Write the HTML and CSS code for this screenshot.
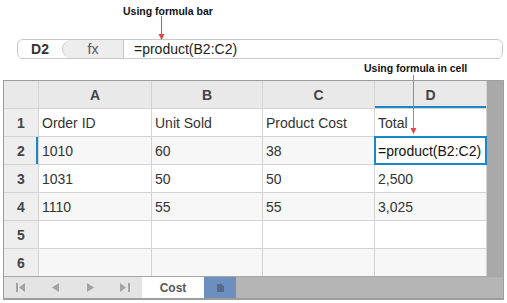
FILE: index.html
```html
<!DOCTYPE html>
<html>
<head>
    <meta charset="UTF-8">
    <title>Formula - product</title>
    <link rel="stylesheet" href="styles.css">
</head>
<body>

    <div class="note note-top">Using formula bar</div>

    <div class="formula-bar">
        <div class="cell-name">D2</div>
        <div class="fx">fx</div>
        <div class="formula">=product(B2:C2)</div>
    </div>

    <div class="note note-cell">Using formula in cell</div>

    <div class="sheet">
        <div class="sheet-body">
            <div class="grid">
                <div class="hd corner"></div>
                <div class="hd">A</div>
                <div class="hd">B</div>
                <div class="hd">C</div>
                <div class="hd active-col">D</div>

                <div class="rh">1</div>
                <div class="cell">Order ID</div>
                <div class="cell">Unit Sold</div>
                <div class="cell">Product Cost</div>
                <div class="cell">Total</div>

                <div class="rh active-row">2</div>
                <div class="cell alt">1010</div>
                <div class="cell alt">60</div>
                <div class="cell alt">38</div>
                <div class="cell alt selected">=product(B2:C2)</div>

                <div class="rh">3</div>
                <div class="cell">1031</div>
                <div class="cell">50</div>
                <div class="cell">50</div>
                <div class="cell">2,500</div>

                <div class="rh">4</div>
                <div class="cell alt">1110</div>
                <div class="cell alt">55</div>
                <div class="cell alt">55</div>
                <div class="cell alt">3,025</div>

                <div class="rh">5</div>
                <div class="cell"></div>
                <div class="cell"></div>
                <div class="cell"></div>
                <div class="cell"></div>

                <div class="rh">6</div>
                <div class="cell alt"></div>
                <div class="cell alt"></div>
                <div class="cell alt"></div>
                <div class="cell alt"></div>
            </div>
            <div class="gutter"></div>
        </div>

        <div class="tabs">
            <div class="nav">
                <div class="nav-btn">
                    <svg width="10" height="9" viewBox="0 0 10 9"><rect x="0" y="0" width="2" height="9" fill="#a3a3a3"/><polygon points="9,0 9,9 3,4.5" fill="#a3a3a3"/></svg>
                </div>
                <div class="nav-btn">
                    <svg width="7" height="9" viewBox="0 0 7 9"><polygon points="7,0 7,9 0,4.5" fill="#a3a3a3"/></svg>
                </div>
                <div class="nav-btn">
                    <svg width="7" height="9" viewBox="0 0 7 9"><polygon points="0,0 0,9 7,4.5" fill="#a3a3a3"/></svg>
                </div>
                <div class="nav-btn">
                    <svg width="10" height="9" viewBox="0 0 10 9"><polygon points="0,0 0,9 6,4.5" fill="#a3a3a3"/><rect x="8" y="0" width="2" height="9" fill="#a3a3a3"/></svg>
                </div>
            </div>
            <div class="tab">Cost</div>
            <div class="add-tab">
                <svg width="7" height="8" viewBox="0 0 7 8"><polygon points="0,0 4.5,0 7,2.5 7,8 0,8" fill="#55698a"/></svg>
            </div>
            <div class="tab-fill"></div>
        </div>
    </div>

    <!-- callout arrows drawn over the page -->
    <svg class="arrows" width="507" height="303" viewBox="0 0 507 303">
        <line x1="161.5" y1="16" x2="161.5" y2="35" stroke="#e04848" stroke-width="1"/>
        <polygon points="158.5,34 164.5,34 161.5,40" fill="#e04848"/>
        <line x1="413.5" y1="75" x2="413.5" y2="129" stroke="#e36a6a" stroke-width="1"/>
        <polygon points="410.5,128 416.5,128 413.5,134" fill="#e04848"/>
    </svg>

</body>
</html>
```

FILE: styles.css
```css
body {
    margin: 0;
    width: 507px;
    height: 303px;
    background: #fff;
    font-family: "Liberation Sans", Arial, sans-serif;
    color: #333;
    position: relative;
    overflow: hidden;
}

.note {
    font-size: 10.5px;
    font-weight: bold;
    color: #111;
    line-height: 12px;
}

.note-top {
    height: 39px;
    padding-top: 5px;
    box-sizing: border-box;
    margin-left: 123px;
}

.formula-bar {
    display: flex;
    align-items: stretch;
    height: 20px;
    margin-left: 17px;
    width: 486px;
    border: 1px solid #c9c9c9;
    border-radius: 6px;
    box-sizing: border-box;
    font-size: 14px;
    line-height: 18px;
}

.cell-name {
    width: 44px;
    text-align: center;
    font-weight: bold;
    color: #333;
}

.fx {
    width: 60px;
    text-align: center;
    background: #ededed;
    color: #555;
    border-left: 1px solid #c9c9c9;
    border-right: 1px solid #c9c9c9;
    border-radius: 9px 0 0 9px;
}

.formula {
    padding-left: 10px;
    color: #222;
}

.note-cell {
    height: 21px;
    padding-top: 3px;
    box-sizing: border-box;
    margin-left: 364px;
}

.sheet {
    margin-left: 3px;
    width: 501px;
    border: 1px solid #9d9d9d;
    box-sizing: border-box;
}

.sheet-body {
    display: flex;
    border-bottom: 1px solid #a6a6a6;
}

.grid {
    display: grid;
    grid-template-columns: 34px 112px 110px 111px 111px;
    grid-template-rows: repeat(7, 27px);
    gap: 1px;
    background: #d3d3d3;
    border-right: 1px solid #d3d3d3;
}

.hd, .rh {
    background: #e9e9e9;
    font-weight: bold;
    font-size: 14px;
    color: #444;
    display: flex;
    align-items: center;
    justify-content: center;
}

.rh {
    background: #eeeeee;
}

.active-col {
    box-shadow: inset 0 -2px 0 #1b87c9;
}

.active-row {
    box-shadow: inset -2px 0 0 #1b87c9;
}

.cell {
    background: #fff;
    font-size: 14px;
    color: #333;
    display: flex;
    align-items: center;
    padding-left: 3px;
    white-space: nowrap;
}

.cell.alt {
    background: #f7f7f7;
}

.cell.selected {
    background: #fff;
    color: #111;
    outline: 2px solid #1b87c9;
    outline-offset: -1px;
    position: relative;
    z-index: 1;
}

.gutter {
    flex: 1;
    background: #a9a9a9;
}

.tabs {
    display: flex;
    height: 21px;
    border-bottom: 1px solid #9d9d9d;
}

.nav {
    display: flex;
    width: 138px;
    background: #e4e4e4;
}

.nav-btn {
    width: 34.5px;
    display: flex;
    align-items: center;
    justify-content: center;
}

.tab {
    width: 62px;
    background: #fff;
    font-size: 12px;
    font-weight: bold;
    color: #555;
    display: flex;
    align-items: center;
    justify-content: center;
}

.add-tab {
    width: 32px;
    background: #6c8fbd;
    display: flex;
    align-items: center;
    justify-content: center;
}

.tab-fill {
    flex: 1;
    background: #b5b5b5;
}

.arrows {
    position: absolute;
    left: 0;
    top: 0;
    pointer-events: none;
    z-index: 5;
}
```
